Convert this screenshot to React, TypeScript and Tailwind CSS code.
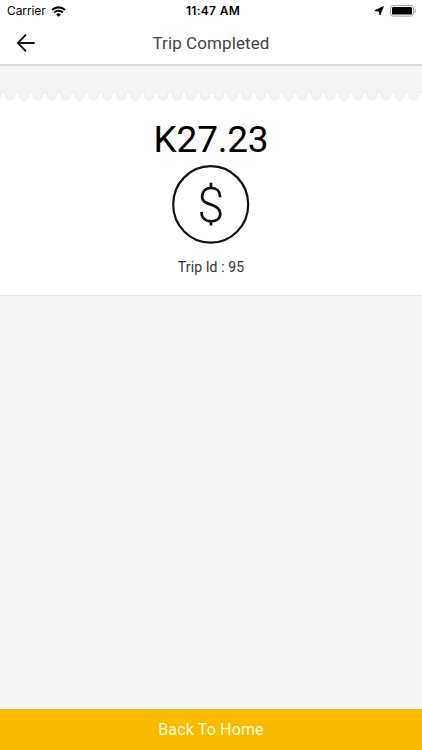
import React from "react";

const TEETH = 32;
const TOOTH_WIDTH = 13.92;

const StatusBar = () => {
  return (
    <div className="grid grid-cols-3 items-center h-[22px] px-[7px] text-black">
      <div className="flex items-center font-['Inter',sans-serif] text-[12px] leading-[22px]">
        <span className="tracking-[-0.1px]">Carrier</span>
        <svg className="ml-[5px]" width="15" height="11" viewBox="0 0 15 11" fill="none">
          <path d="M1 4a9.4 9.4 0 0 1 13 0" stroke="black" strokeWidth="2.2" />
          <path d="M3.2 6.6a6.1 6.1 0 0 1 8.6 0" stroke="black" strokeWidth="2" />
          <path d="M7.5 10.8 5.1 8.4a3.4 3.4 0 0 1 4.8 0z" fill="black" />
        </svg>
      </div>
      <div className="text-center font-['Inter',sans-serif] font-semibold text-[12px] leading-[22px] tracking-[0.3px] whitespace-nowrap pl-1">
        11:47 AM
      </div>
      <div className="flex justify-end items-center">
        <svg width="10" height="10" viewBox="0 0 10 10">
          <path
            d="M9.4 0.6 6 9 5 5.2 0.8 4.6z"
            fill="black"
            stroke="black"
            strokeWidth="0.8"
            strokeLinejoin="round"
          />
        </svg>
        <svg className="ml-[6px] -mr-[1px]" width="26" height="12" viewBox="0 0 26 12">
          <rect x="0.5" y="0.5" width="23" height="10.6" rx="2.6" fill="white" stroke="#a3a3a3" />
          <rect x="2" y="2" width="20" height="7.6" rx="1.2" fill="black" />
          <path d="M24.6 4v4c.9-.4 1.3-1.1 1.3-2s-.4-1.6-1.3-2z" fill="#a3a3a3" />
        </svg>
      </div>
    </div>
  );
};

const Header = () => {
  return (
    <div className="grid grid-cols-[40px_1fr_40px] items-center h-[44px] border-b-2 border-[#dadada]">
      <button className="flex justify-end pr-[5px]" aria-label="Back">
        <svg width="19" height="18" viewBox="0 0 19 18" fill="none" stroke="#111" strokeWidth="1.8">
          <path d="M10 0.6 1.8 9l8.2 8.4M1.8 9H18.6" />
        </svg>
      </button>
      <div className="text-center text-[17px] leading-6 text-[#444] tracking-[0.1px]">Trip Completed</div>
    </div>
  );
};

// scalloped top edge of the receipt
const ReceiptEdge = () => {
  return (
    <svg className="block w-full" height="10" viewBox="0 0 422 10">
      <rect width="422" height="10" fill="white" />
      <rect width="422" height="0.8" fill="#f4f4f4" />
      {Array.from({ length: TEETH }, (_, i) => (
        <path
          key={i}
          transform={`translate(${i * TOOTH_WIDTH - 13} 0)`}
          d="M0 .6H4.7V3.6a4.4 4.4 0 0 0 8.8 0V.6"
          fill="#f4f4f4"
          stroke="#e5e5e5"
          strokeWidth="0.9"
        />
      ))}
    </svg>
  );
};

const Receipt = () => {
  return (
    <div className="mt-[26px]">
      <ReceiptEdge />
      <div className="flex flex-col items-center bg-white h-[194px] border-b border-[#e6e6e6]">
        <div className="mt-[16px] text-[37px] leading-[44px] tracking-[-0.2px] text-black">K27.23</div>
        <svg className="mt-[3px]" width="78" height="79" viewBox="0 0 78 79" fill="none" stroke="#111">
          <ellipse cx="38.7" cy="39.4" rx="37.5" ry="38.2" strokeWidth="2.2" />
          <path
            d="M48.1 32.3v-.7c0-5.2-3.6-8.7-9-8.7s-9 3.5-9 8.3c0 5 3.3 6.6 9 8.4 6.1 2 9.2 4.2 9.2 9 0 5-3.7 7.7-9.1 7.7-5.7 0-9.6-3.2-9.6-8.6v-.7M39 17.7v5.2M39 56.3v4.2"
            strokeWidth="2.7"
          />
        </svg>
        <div className="mt-[13px] text-[14px] leading-5 text-[#333] tracking-[0.1px]">Trip Id : 95</div>
      </div>
    </div>
  );
};

const App = () => {
  return (
    <div className="flex flex-col w-full h-screen bg-[#f4f4f4] font-['Roboto',sans-serif]">
      <div className="bg-white">
        <StatusBar />
        <Header />
      </div>
      <Receipt />
      <button className="mt-auto h-[41px] bg-[#f8bb00] text-[#fff8dc] text-[16px] tracking-[0.15px]">
        Back To Home
      </button>
    </div>
  );
};

export default App;
